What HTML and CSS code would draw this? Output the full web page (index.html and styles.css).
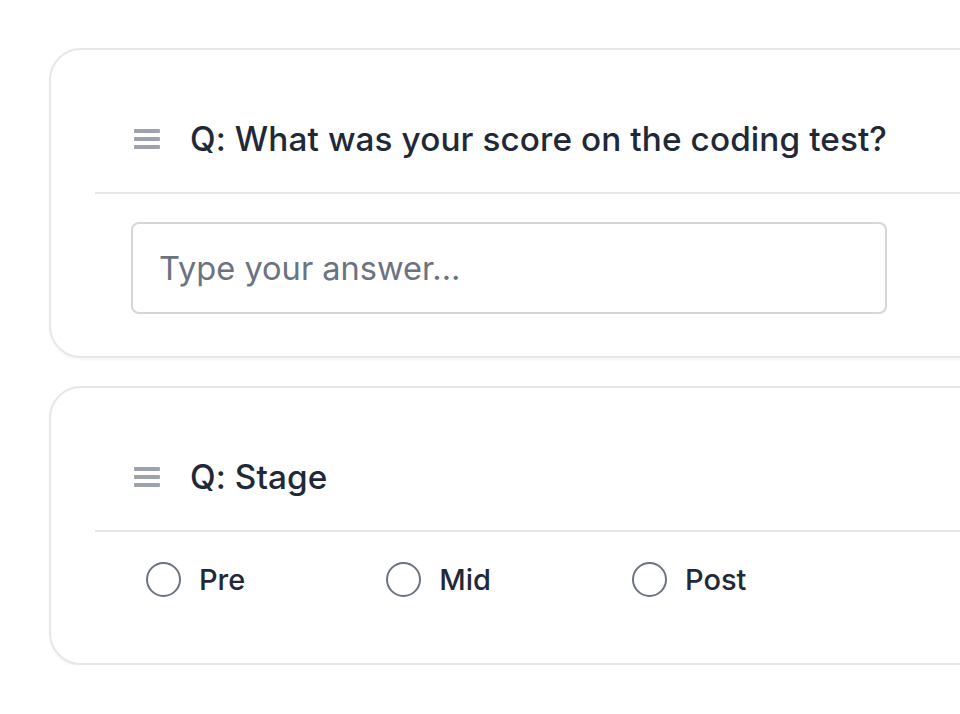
FILE: index.html
```html
<!DOCTYPE html>
<html lang="en">
<head>
    <meta charset="UTF-8">
    <meta name="viewport" content="width=device-width, initial-scale=1.0">
    <title>Questions</title>
    <link rel="stylesheet" href="styles.css">
</head>
<body>
    <div class="container">
        <div class="question-card">
            <div class="question-header">
                <svg class="drag-handle" width="26" height="22" viewBox="0 0 26 22">
                    <rect x="0" y="1" width="26" height="4" rx="1"/>
                    <rect x="0" y="9" width="26" height="4" rx="1"/>
                    <rect x="0" y="17" width="26" height="4" rx="1"/>
                </svg>
                <h2>Q: What was your score on the coding test?</h2>
            </div>
            <div class="question-body text-body">
                <input type="text" class="answer-input" placeholder="Type your answer...">
            </div>
        </div>

        <div class="question-card">
            <div class="question-header">
                <svg class="drag-handle" width="26" height="22" viewBox="0 0 26 22">
                    <rect x="0" y="1" width="26" height="4" rx="1"/>
                    <rect x="0" y="9" width="26" height="4" rx="1"/>
                    <rect x="0" y="17" width="26" height="4" rx="1"/>
                </svg>
                <h2>Q: Stage</h2>
            </div>
            <div class="question-body radio-body">
                <label class="radio-option"><span class="radio-circle"></span>Pre</label>
                <label class="radio-option"><span class="radio-circle"></span>Mid</label>
                <label class="radio-option"><span class="radio-circle"></span>Post</label>
            </div>
        </div>
    </div>
</body>
</html>
```

FILE: styles.css
```css
:root {
    --text-color: #1f2937;
    --muted-color: #6b7280;
    --border-color: #e5e7eb;
}

* {
    box-sizing: border-box;
    margin: 0;
    padding: 0;
}

body {
    font-family: 'Inter', 'Open Sans', sans-serif;
    background-color: #fff;
    color: var(--text-color);
    overflow: hidden;
}

.container {
    padding: 48px 0 0 49px;
    display: flex;
    flex-direction: column;
    gap: 28px;
}

.question-card {
    width: 1000px;
    background: white;
    border: 2px solid var(--border-color);
    border-radius: 32px;
    box-shadow: 0 2px 3px rgba(0,0,0,0.04);
    padding: 36px 0 0 44px;
}

.question-header {
    display: flex;
    align-items: center;
    gap: 30px;
    height: 108px;
    padding-left: 39px;
    border-bottom: 2px solid var(--border-color);
}

.drag-handle {
    fill: #9ca3af;
    flex-shrink: 0;
}

.question-header h2 {
    font-size: 33.3px;
    font-weight: 500;
    letter-spacing: 0.1px;
    line-height: 40px;
}

.text-body {
    padding: 28px 0 42px 36px;
}

.answer-input {
    display: block;
    width: 756px;
    height: 92px;
    padding: 0 26px;
    border: 2px solid #d4d6da;
    border-radius: 8px;
    font-family: inherit;
    font-size: 32.6px;
    color: var(--text-color);
    outline: none;
}

.answer-input::placeholder {
    color: var(--muted-color);
}

.radio-body {
    display: flex;
    gap: 141px;
    padding: 30px 0 66px 51px;
}

.radio-option {
    display: flex;
    align-items: center;
    gap: 18px;
    font-size: 29px;
    line-height: 35px;
    font-weight: 500;
}

.radio-circle {
    width: 35px;
    height: 35px;
    border: 2px solid var(--muted-color);
    border-radius: 50%;
}
```
